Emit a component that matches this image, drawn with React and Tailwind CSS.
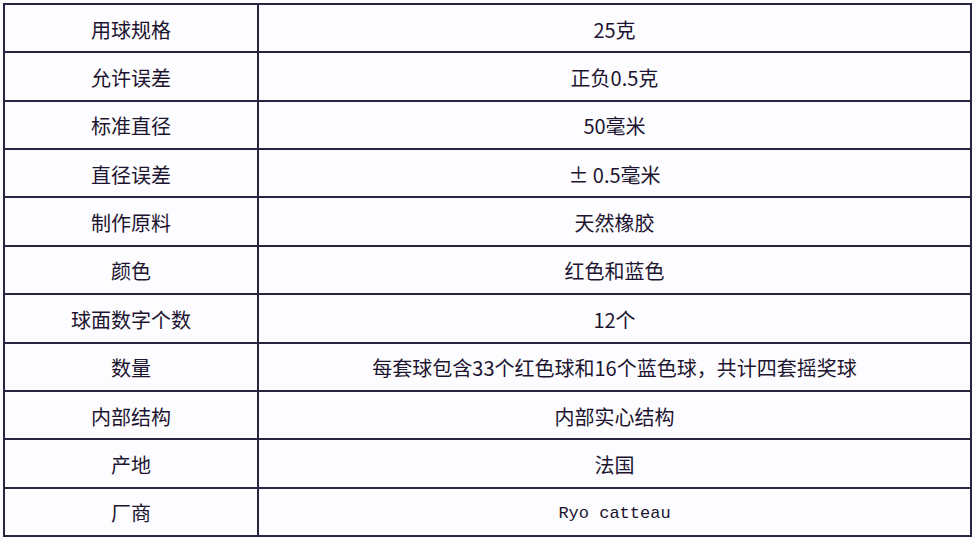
const rows = [
  ['用球规格', '25克'],
  ['允许误差', '正负0.5克'],
  ['标准直径', '50毫米'],
  ['直径误差', '± 0.5毫米'],
  ['制作原料', '天然橡胶'],
  ['颜色', '红色和蓝色'],
  ['球面数字个数', '12个'],
  ['数量', '每套球包含33个红色球和16个蓝色球，共计四套摇奖球'],
  ['内部结构', '内部实心结构'],
  ['产地', '法国'],
  ['厂商', 'Ryo catteau', true],
];

export default function App() {
  return (
    <div className="w-[976px] h-[540px] bg-[#fdfcff] pt-[3px] pl-[3px]">
      <div
        className="w-[969px] h-[534px] border-2 border-[#2a2440] flex flex-col text-[20px] text-[#1c1430]"
        style={{ fontFamily: '"Noto Sans CJK SC", "Noto Sans", sans-serif' }}
      >
        {rows.map(([label, value, mono], i) => (
          <div key={i} className={`flex-1 flex ${i > 0 ? 'border-t-2 border-[#2a2440]' : ''}`}>
            <div className="w-[254px] border-r-2 border-[#2a2440] flex items-center justify-center pt-[3px]">
              {label}
            </div>
            <div
              className={`flex-1 flex items-center justify-center pt-[3px] ${mono ? 'text-[17px]' : ''}`}
              style={mono ? { fontFamily: '"Liberation Mono", monospace' } : undefined}
            >
              {value}
            </div>
          </div>
        ))}
      </div>
    </div>
  );
}
